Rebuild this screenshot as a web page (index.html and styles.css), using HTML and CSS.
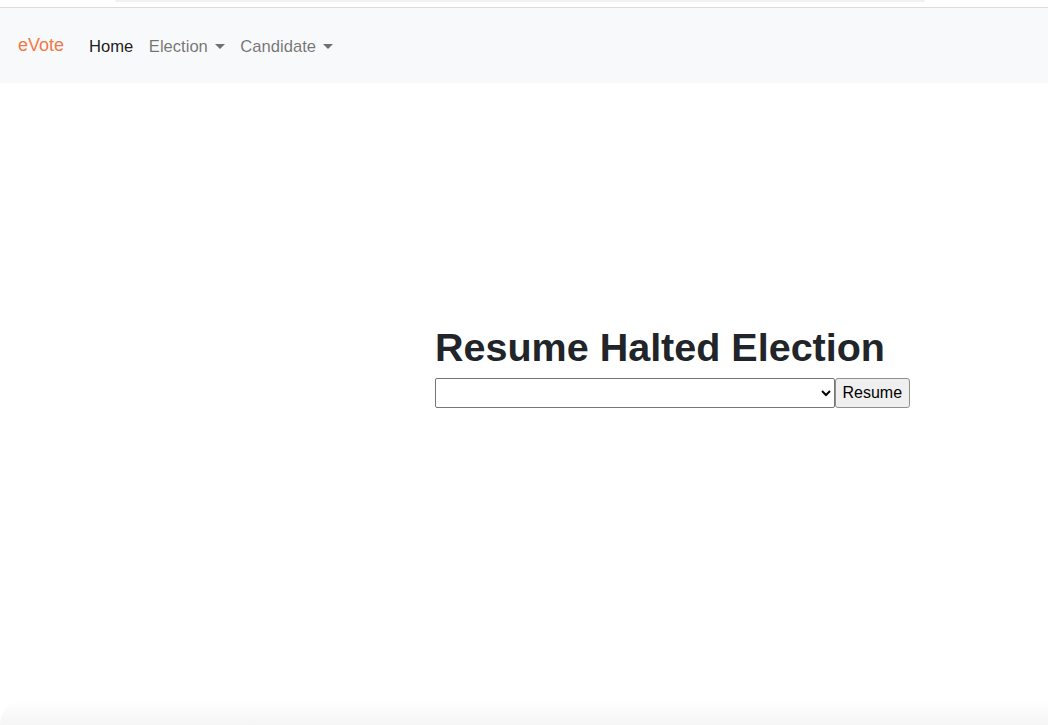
FILE: index.html
```html
<!DOCTYPE html>
<html>
<head>
<meta charset="utf-8">
<link rel="stylesheet" href="styles.css">
</head>
<body>
<div class="topstrip"><div class="tab"></div></div>
<nav class="navbar">
  <a class="brand">eVote</a>
  <ul class="nav">
    <li class="nav-link active">Home</li>
    <li class="nav-link dropdown">Election</li>
    <li class="nav-link dropdown">Candidate</li>
  </ul>
</nav>
<main class="main">
  <div class="panel">
    <h1 class="title">Resume Halted Election</h1>
    <form class="row">
      <select class="sel"></select><button type="button" class="btn">Resume</button>
    </form>
  </div>
</main>
<div class="bottomshade"></div>
</body>
</html>
```
FILE: styles.css
```css
html, body { margin: 0; padding: 0; }
body {
  font-family: "Liberation Sans", Arial, sans-serif;
  background: #fff;
  width: 1048px;
  height: 725px;
  overflow: hidden;
  position: relative;
}
.topstrip {
  height: 7px;
  background: #fff;
  border-bottom: 1px solid #dcdcdc;
  position: relative;
}
.tab {
  margin-left: 115px;
  width: 810px;
  height: 2px;
  background: #f1f1f1;
  border-radius: 0 0 6px 6px;
}
.navbar {
  background: #f8f9fa;
  height: 75px;
  display: flex;
  align-items: center;
  padding: 2px 18px 0 18px;
  box-sizing: border-box;
}
.brand {
  color: #f07a45;
  font-size: 18px;
  margin-right: 25px;
  padding-bottom: 2px;
}
.nav {
  display: flex;
  list-style: none;
  margin: 0;
  padding: 0;
  gap: 15.5px;
}
.nav-link {
  font-size: 16.6px;
  color: rgba(0,0,0,0.55);
}
.nav-link.active { color: rgba(0,0,0,0.9); }
.dropdown::after {
  content: "";
  display: inline-block;
  margin-left: 7px;
  vertical-align: 3px;
  border-top: 5px solid;
  border-left: 5px solid transparent;
  border-right: 5px solid transparent;
}
.main {
  padding-top: 241px;
  padding-left: 435px;
}
.title {
  margin: 0 0 7px 0;
  font-size: 39.5px;
  font-weight: 700;
  color: #212529;
  line-height: 1.2;
}
.row { display: flex; margin: 0; }
.sel {
  width: 400px;
  height: 30px;
  border: 1px solid #767676;
  border-radius: 2px;
  background: #fff;
  margin: 0;
  box-sizing: border-box;
}
.btn {
  height: 30px;
  box-sizing: border-box;
  font-family: "Liberation Sans", Arial, sans-serif;
  font-size: 16px;
  padding: 0 6.5px;
  background: #efefef;
  border: 1px solid #8f8f8f;
  border-radius: 3px;
  color: #000;
  margin: 0;
}
.bottomshade {
  position: absolute;
  left: 0; right: 0; bottom: 0;
  height: 25px;
  background: linear-gradient(to bottom, rgba(0,0,0,0), rgba(0,0,0,0.04));
  border-top-left-radius: 40px;
}
```
